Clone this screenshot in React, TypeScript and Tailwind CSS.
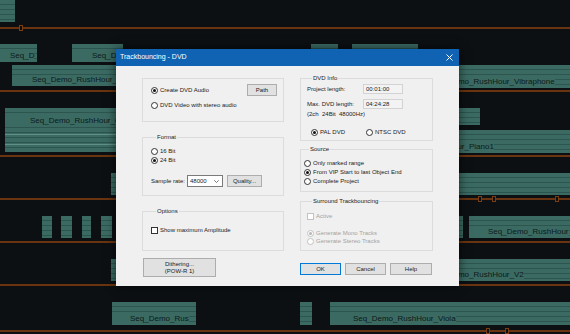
import React from "react";
import cn from "clsx";

/* Arrangement behind the dialog: tracks in flow, clips placed on the timeline */
type Clip = { pos: string; label?: string; pad?: string; auto?: boolean };

interface Track {
  h: string;
  clips: Clip[];
  marks?: string[];
}

const TRACKS: Track[] = [
  { h: "h-[27px]", clips: [{ pos: "left-0 top-0 w-[15px] h-[22px]" }], marks: ["left-[19px]"] },
  {
    h: "h-[61px]",
    clips: [
      { pos: "left-0 top-[15px] w-[37px] h-[18px]", label: "Seq_D", pad: "pl-[10px]" },
      { pos: "left-[72px] top-[15px] w-[51px] h-[18px]", label: "Seq_D", pad: "pl-[20px]" },
      { pos: "left-[311px] top-[15px] w-[27px] h-[18px]" },
      { pos: "left-[352px] top-[15px] w-[66px] h-[18px]" },
      { pos: "left-[12px] top-[36px] w-[200px] h-[21px]", label: "Seq_Demo_RushHour_Clarinet", pad: "pl-[20px]" },
      { pos: "left-[400px] top-[36px] w-[170px] h-[23px]", label: "Seq_Demo_RushHour_Vibraphone", pad: "pl-[29px]" },
    ],
  },
  {
    h: "h-[63px]",
    clips: [
      { pos: "left-[5px] top-[16px] w-[200px] h-[44px]", label: "Seq_Demo_RushHour_Clarinet", pad: "pl-[25px]", auto: true },
      { pos: "left-[430px] top-[16px] w-[50px] h-[17px]" },
      { pos: "left-[370px] top-[38px] w-[200px] h-[23px]", label: "Seq_Demo_RushHour_Piano1", pad: "pl-[14px]" },
    ],
  },
  {
    h: "h-[41px]",
    clips: [
      { pos: "left-[111px] top-[16px] w-[100px] h-[22px]" },
      { pos: "left-[300px] top-[16px] w-[270px] h-[22px]" },
    ],
    marks: ["left-[478px]", "left-[492px]", "left-[555px]"],
  },
  {
    h: "h-[41px]",
    clips: [
      { pos: "left-[42px] top-[16px] w-[10px] h-[22px]" },
      { pos: "left-[61px] top-[16px] w-[11px] h-[22px]" },
      { pos: "left-[82px] top-[16px] w-[9px] h-[22px]" },
      { pos: "left-[101px] top-[16px] w-[11px] h-[22px]" },
      { pos: "left-[430px] top-[16px] w-[33px] h-[22px]" },
      { pos: "left-[469px] top-[16px] w-[101px] h-[22px]", label: "Seq_Demo_RushHour", pad: "pl-[19px]" },
    ],
  },
  {
    h: "h-[41px]",
    clips: [
      { pos: "left-[111px] top-[16px] w-[120px] h-[22px]" },
      { pos: "left-[300px] top-[16px] w-[270px] h-[22px]", label: "Seq_Demo_RushHour_V2", pad: "pl-[129px]" },
    ],
  },
  {
    h: "h-[44px]",
    clips: [
      { pos: "left-[112px] top-[16px] w-[84px] h-[23px]", label: "Seq_Demo_Rus", pad: "pl-[18px]" },
      { pos: "left-[300px] top-[16px] w-[12px] h-[23px]" },
      { pos: "left-[330px] top-[16px] w-[240px] h-[23px]", label: "Seq_Demo_RushHour_Viola", pad: "pl-[23px]" },
    ],
    marks: ["left-[486px]", "left-[505px]"],
  },
];

function Arrangement() {
  return (
    <div className="flex flex-col">
      {TRACKS.map((t, i) => (
        <div key={i} className="relative">
          <div className={cn("relative", t.h)}>
            {t.clips.map((c, j) => (
              <div
                key={j}
                className={cn(
                  "absolute flex items-end overflow-hidden bg-[repeating-linear-gradient(to_bottom,#3b6a63_0px,#3b6a63_4px,#2c5550_4px,#2c5550_5px)]",
                  c.pos
                )}
              >
                {c.auto && (
                  <>
                    <div className="absolute left-0 right-0 top-[26px] h-px bg-[#5f8f87]" />
                    <div className="absolute left-0 right-0 top-[36px] h-px bg-[#5f8f87]" />
                  </>
                )}
                {c.label && (
                  <span
                    className={cn(
                      "whitespace-nowrap bg-[#3b6a63] pb-[2px] text-[8px] leading-[9px] text-[#0c1a18]",
                      c.pad,
                      c.auto && "mb-[25px]"
                    )}
                  >
                    {c.label}
                  </span>
                )}
              </div>
            ))}
          </div>
          <div className="h-[2px] bg-[#6a3410]" />
          {t.marks?.map((m, k) => (
            <div key={k} className={cn("absolute bottom-[-2px] h-[6px] w-[4px] border border-[#7a3d12] bg-[#0c1012]", m)} />
          ))}
        </div>
      ))}
    </div>
  );
}

/* Dialog controls */
function Radio({ checked, disabled }: { checked?: boolean; disabled?: boolean }) {
  return (
    <span
      className={cn(
        "flex h-[7px] w-[7px] shrink-0 items-center justify-center rounded-full border bg-white",
        disabled ? "border-[#c2c2c2]" : "border-[#333]"
      )}
    >
      {checked && <span className={cn("h-[3px] w-[3px] rounded-full", disabled ? "bg-[#b5b5b5]" : "bg-[#111]")} />}
    </span>
  );
}

function Check({ disabled }: { disabled?: boolean }) {
  return (
    <span className={cn("h-[7px] w-[7px] shrink-0 border bg-white", disabled ? "border-[#c2c2c2]" : "border-[#333]")} />
  );
}

function Option({ label, checked, disabled, box, className }: {
  label: string; checked?: boolean; disabled?: boolean; box?: boolean; className?: string;
}) {
  return (
    <div className={cn("flex items-center gap-[2px]", disabled && "text-[#a3a3a3]", className)}>
      {box ? <Check disabled={disabled} /> : <Radio checked={checked} disabled={disabled} />}
      <span className="whitespace-nowrap">{label}</span>
    </div>
  );
}

function Button({ children, className, primary }: { children: React.ReactNode; className?: string; primary?: boolean }) {
  return (
    <div
      className={cn(
        "flex items-center justify-center border bg-[#e1e1e1] leading-[7px]",
        primary ? "border-[#0078d7]" : "border-[#adadad]",
        className
      )}
    >
      {children}
    </div>
  );
}

function Group({ title, className, children }: { title: string; className?: string; children: React.ReactNode }) {
  return (
    <fieldset className={cn("min-w-0 border border-[#dcdcdc]", className)}>
      <legend className="ml-[5px] px-[1px] leading-[8px]">{title}</legend>
      {children}
    </fieldset>
  );
}

function Field({ value }: { value: string }) {
  return (
    <div className="flex h-[10px] w-[40px] items-center border border-[#d3d3d3] bg-[#f3f3f3] pl-[2px]">{value}</div>
  );
}

function Dialog() {
  return (
    <div className="absolute left-[116px] top-[49px] flex h-[237px] w-[343px] flex-col bg-[#f0f0f0] text-[6px] text-[#1a1a1a] shadow-[0_0_10px_rgba(0,0,0,0.6)]">
      {/* Title bar */}
      <div className="flex h-[17px] items-center bg-[#0f63b2] pl-[4px] pr-[6px] text-[7px] text-white">
        <span>Trackbouncing - DVD</span>
        <svg className="ml-auto" width="7" height="7" viewBox="0 0 7 7">
          <path d="M0.5 0.5L6.5 6.5M6.5 0.5L0.5 6.5" stroke="white" strokeWidth="1" />
        </svg>
      </div>

      <div className="flex gap-[16px] pl-[26px] pt-[8px]">
        {/* Left column */}
        <div className="flex w-[142px] flex-col pt-[4px]">
          <div className="flex h-[44px] flex-col border border-[#dcdcdc] pl-[8px] pt-[5px]">
            <div className="flex h-[12px] items-center">
              <Option label="Create DVD Audio" checked />
              <Button className="ml-auto mr-[6px] h-[12px] w-[30px]">Path</Button>
            </div>
            <Option label="DVD Video with stereo audio" className="mt-[3px] h-[12px]" />
          </div>

          <Group title="Format" className="mt-[11px] pb-[8px] pl-[8px] pt-[6px]">
            <Option label="16 Bit" className="h-[8px]" />
            <Option label="24 Bit" checked className="mt-[1px] h-[8px]" />
            <div className="mt-[11px] flex h-[12px] items-center">
              <span className="w-[36px]">Sample rate:</span>
              <div className="flex h-[12px] w-[36px] items-center border border-[#7a7a7a] bg-white pl-[2px] pr-[3px]">
                <span>48000</span>
                <svg className="ml-auto" width="5" height="3" viewBox="0 0 5 3">
                  <path d="M0.3 0.3L2.5 2.5L4.7 0.3" stroke="#555" strokeWidth="0.8" fill="none" />
                </svg>
              </div>
              <Button className="ml-[4px] h-[12px] w-[35px]">Quality...</Button>
            </div>
          </Group>

          <Group title="Options" className="mt-[11px] pb-[16px] pl-[8px] pt-[11px]">
            <Option label="Show maximum Amplitude" box className="h-[8px]" />
          </Group>

          <Button className="ml-[1px] mt-[7px] h-[19px] w-[73px] flex-col">
            <span>Dithering...</span>
            <span>(POW-R 1)</span>
          </Button>
        </div>

        {/* Right column */}
        <div className="flex w-[133px] flex-col">
          <Group title="DVD Info" className="pb-[4px] pl-[6px] pt-[2px]">
            <div className="flex h-[10px] items-center">
              <span className="w-[56px]">Project length:</span>
              <Field value="00:01:00" />
            </div>
            <div className="mt-[5px] flex h-[10px] items-center">
              <span className="w-[56px]">Max. DVD length:</span>
              <Field value="04:24:28" />
            </div>
            <div className="mt-[1px] flex h-[8px] items-center whitespace-pre">(2ch  24Bit  48000Hz)</div>
            <div className="mt-[10px] flex h-[8px] items-center pl-[4px]">
              <Option label="PAL DVD" checked className="w-[55px]" />
              <Option label="NTSC DVD" />
            </div>
          </Group>

          <Group title="Source" className="mt-[4px] pb-[5px] pl-[3px] pt-[6px]">
            <Option label="Only marked range" className="h-[9px]" />
            <Option label="From VIP Start to last Object End" checked className="h-[9px]" />
            <Option label="Complete Project" className="h-[9px]" />
          </Group>

          <Group title="Surround Trackbouncing" className="mt-[5px] pb-[5px] pl-[6px] pt-[7px]">
            <Option label="Active" box disabled className="h-[8px]" />
            <div className="mt-[9px] flex flex-col">
              <Option label="Generate Mono Tracks" checked disabled className="h-[8px]" />
              <Option label="Generate Stereo Tracks" disabled className="h-[8px]" />
            </div>
          </Group>

          <div className="mt-[12px] flex gap-[4px]">
            <Button primary className="h-[12px] w-[41px]">OK</Button>
            <Button className="h-[12px] w-[41px]">Cancel</Button>
            <Button className="h-[12px] w-[42px]">Help</Button>
          </div>
        </div>
      </div>
    </div>
  );
}

export default function App() {
  return (
    <div className="relative h-[334px] w-[570px] overflow-hidden bg-[#0c1012] font-['Liberation_Sans',Arial,sans-serif]">
      <Arrangement />
      <Dialog />
    </div>
  );
}
